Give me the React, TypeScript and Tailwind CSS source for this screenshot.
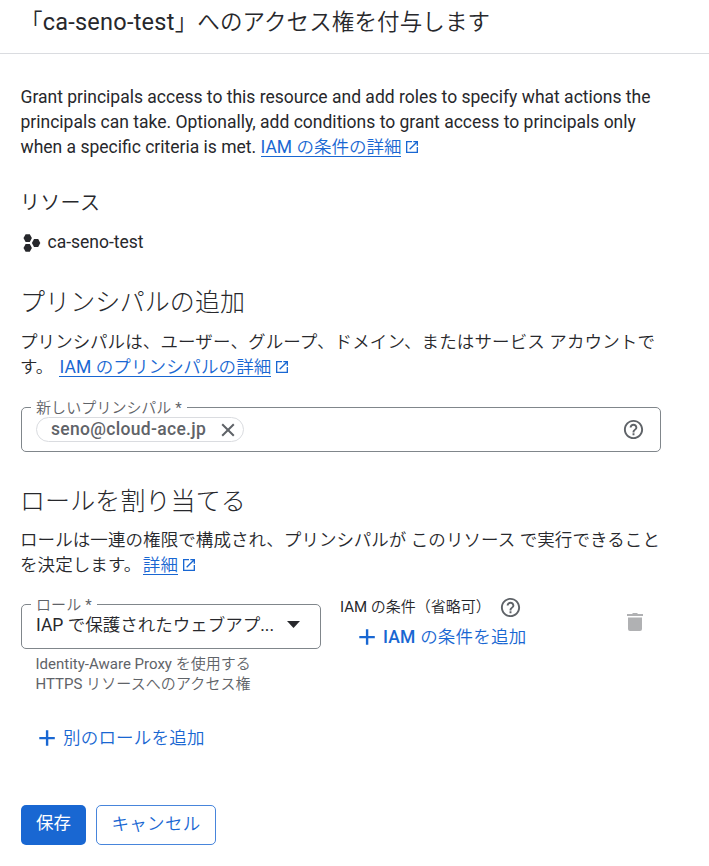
import type { ReactNode } from "react";

function ExternalLink({ children }: { children: ReactNode }) {
  return (
    <a href="#" className="text-[#1967d2]">
      <span className="inline-block h-[22px] border-b border-[#1967d2] leading-[25px]">{children}</span>
      <svg viewBox="0 0 24 24" className="ml-[3px] inline-block size-4 align-[-2px]" fill="currentColor">
        <path d="M19 19H5V5h7V3H3v18h18v-9h-2v7zM14 3v2h3.6l-9.8 9.8 1.4 1.4L19 6.4V10h2V3h-7z" />
      </svg>
    </a>
  );
}

function HelpIcon() {
  return (
    <svg viewBox="0 0 24 24" className="size-[23px] shrink-0 text-[#5f6368]" fill="currentColor">
      <path d="M11 18h2v-2h-2v2zm1-16C6.48 2 2 6.48 2 12s4.48 10 10 10 10-4.48 10-10S17.52 2 12 2zm0 18c-4.41 0-8-3.59-8-8s3.59-8 8-8 8 3.59 8 8-3.59 8-8 8zm0-14c-2.21 0-4 1.79-4 4h2c0-1.1.9-2 2-2s2 .9 2 2c0 2-3 1.75-3 5h2c0-2.25 3-2.5 3-5 0-2.21-1.79-4-4-4z" />
    </svg>
  );
}

function PlusIcon() {
  return (
    <svg viewBox="0 0 16 16" className="relative -top-px size-4 shrink-0" fill="currentColor">
      <path d="M6.9 0.3h2.4v6.6h6.5v2.4H9.3v6.5H6.9V9.3H0.3V6.9h6.6z" />
    </svg>
  );
}

function ProjectIcon() {
  return (
    <svg viewBox="0 0 18 18" className="size-[18px] shrink-0" fill="currentColor">
      <path d="M2.6 0.2h4.2l2.1 3.9-2.1 3.9H2.6L0.5 4.1z" />
      <path d="M2.6 10h4.2l2.1 3.9-2.1 3.9H2.6l-2.1-3.9z" />
      <path d="M11 5.1h4.2L17.3 9l-2.1 3.9H11L8.9 9z" />
    </svg>
  );
}

function FieldLabel({ children }: { children: ReactNode }) {
  return (
    <span className="absolute -top-[9px] left-[9px] bg-white px-[5px] text-[15px] leading-[18px] tracking-[0.1px] whitespace-nowrap text-[#5f6368]">
      {children}
    </span>
  );
}

export default function App() {
  return (
    <div className="h-[866px] overflow-hidden bg-white font-[Roboto,'Noto_Sans_CJK_JP',sans-serif] text-[17.5px] leading-[25px] text-[#27282c]">
      {/* Header */}
      <header className="h-[54px] border-b border-[#dadce0] pt-[7px] pl-[20px]">
        <h1 className="text-[22.5px] leading-[30px] font-[350] tracking-[0.12px] whitespace-nowrap">
          「<span className="text-[23.5px] font-[370] tracking-[0.25px]">ca-seno-test</span>」へのアクセス権を付与します
        </h1>
      </header>

      <main className="px-[21px] pt-[31px]">
        <p className="-ml-[0.5px] h-[75px] whitespace-nowrap">
          Grant principals access to this resource and add roles to specify what actions the
          <br />
          principals can take. Optionally, add conditions to grant access to principals only
          <br />
          when a specific criteria is met.{" "}
          <ExternalLink>
            IAM <span className="font-[350]">の条件の詳細</span>
          </ExternalLink>
        </p>

        {/* Resource */}
        <h3 className="mt-[31px] -ml-px text-xl leading-[25px] font-[350] tracking-[0.3px]">リソース</h3>
        <div className="mt-[14px] flex h-[25px] items-center gap-[6.5px] pl-[2px]">
          <ProjectIcon />
          <span>ca-seno-test</span>
        </div>

        {/* Principals */}
        <h2 className="mt-[33px] -ml-px text-[25px] leading-[30px] font-light tracking-[0.1px]">プリンシパルの追加</h2>
        <p className="mt-[12px] -ml-px h-[50px] font-[350] tracking-[0.12px] whitespace-nowrap">
          プリンシパルは、ユーザー、グループ、ドメイン、またはサービス アカウントで
          <br />
          す。{" "}
          <span className="ml-[1.5px]">
            <ExternalLink>
              <span className="font-normal">IAM</span> のプリンシパルの詳細
            </ExternalLink>
          </span>
        </p>
        <div className="relative mt-[27px] flex h-[45px] w-[640px] items-center justify-between rounded-[5px] border border-[#80868b] pr-[15px] pl-[14px]">
          <FieldLabel>
            <span className="font-[350]">新しいプリンシパル</span> *
          </FieldLabel>
          <div className="flex h-[25px] w-[208px] items-center rounded-full border border-[#dadce0] pl-[14px] font-medium whitespace-nowrap text-[#5f6368]">
            <span className="w-[155px] tracking-[0.31px]">seno@cloud-ace.jp</span>
            <svg viewBox="0 0 14 14" className="ml-[15px] size-[14px]" stroke="currentColor" strokeWidth="2">
              <path d="M1.2 1.2l11.6 11.6M12.8 1.2L1.2 12.8" />
            </svg>
          </div>
          <HelpIcon />
        </div>

        {/* Roles */}
        <h2 className="mt-[35px] -ml-px text-[25px] leading-[30px] font-light tracking-[0.1px]">ロールを割り当てる</h2>
        <p className="mt-[11px] -ml-px h-[50px] font-[350] tracking-[0.08px] whitespace-nowrap">
          ロールは一連の権限で構成され、プリンシパルが このリソース で実行できること
          <br />
          を決定します。
          <span className="ml-[1.5px]">
            <ExternalLink>詳細</ExternalLink>
          </span>
        </p>
        <div className="mt-[26px] flex">
          <div className="w-[300px]">
            <div className="relative flex h-[45px] items-start justify-between rounded-[5px] border border-[#80868b] pt-[8px] pr-[20px] pl-[14px]">
              <FieldLabel>
                <span className="font-[350]">ロール</span> *
              </FieldLabel>
              <span className="whitespace-nowrap">
                IAP <span className="font-[350]">で保護されたウェブアプ</span>...
              </span>
              <svg viewBox="0 0 13 7" className="mt-[8px] h-[7px] w-[13px]" fill="currentColor">
                <path d="M0 0h13L6.5 7z" />
              </svg>
            </div>
            <p className="mt-[5px] pl-[14.5px] text-[15px] leading-5 text-[#5f6368]">
              Identity-Aware Proxy <span className="font-[350]">を使用する</span>
              <br />
              HTTPS <span className="font-[350] tracking-[0.1px]">リソースへのアクセス権</span>
            </p>
          </div>
          <div className="-mt-[9px] ml-[19px] w-[282px]">
            <div className="flex h-[25px] items-center text-[15px]">
              <span className="w-[159px] whitespace-nowrap">
                IAM <span className="font-[350]">の条件（省略可）</span>
              </span>
              <HelpIcon />
            </div>
            <button className="mt-[5px] flex h-[25px] items-center gap-[8px] pl-[19px] whitespace-nowrap text-[#1967d2]">
              <PlusIcon />
              <span className="tracking-[0.2px]">
                <span className="font-medium">IAM</span> <span className="font-[350]">の条件を追加</span>
              </span>
            </button>
          </div>
          <svg viewBox="0 0 16 18" className="mt-[9px] ml-[5px] h-[18px] w-4 text-[#b0b1b3]" fill="currentColor">
            <path d="M0 1h5l1-1h4l1 1h5v2H0zM1 4.5h14V16a2 2 0 0 1-2 2H3a2 2 0 0 1-2-2z" />
          </svg>
        </div>

        <button className="mt-[32px] flex h-[25px] items-center gap-[8px] pl-[18px] text-[#1967d2]">
          <PlusIcon />
          <span className="font-[350] tracking-[0.2px]">別のロールを追加</span>
        </button>

        {/* Actions */}
        <div className="mt-[54px] flex gap-[10px]">
          <button className="h-10 w-[65px] rounded-[5px] bg-[#1967d2] pb-[3px] text-white">保存</button>
          <button className="h-10 w-[120px] rounded-[5px] border border-[#1967d2]/80 pb-[2px] font-[350] tracking-[0.3px] text-[#1967d2]">
            キャンセル
          </button>
        </div>
      </main>
    </div>
  );
}
